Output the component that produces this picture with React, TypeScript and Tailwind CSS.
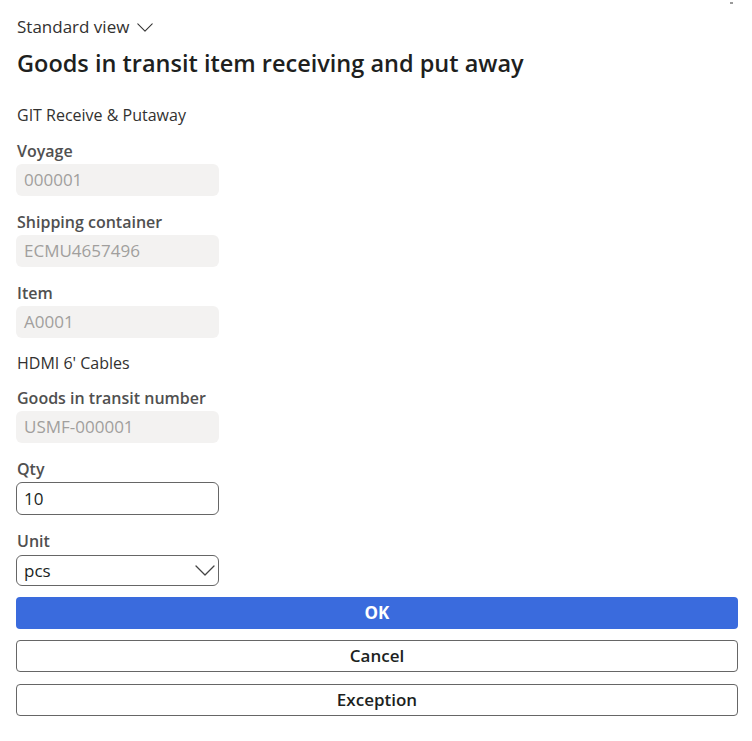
const FONT = "font-['Open_Sans','Noto_Sans',sans-serif]";

type Field = { label: string; value: string };

function Chevron({ className }: { className?: string }) {
  return (
    <svg viewBox="0 0 20 11" fill="none" stroke="currentColor" strokeWidth={1.3} className={className}>
      <polyline points="1,1 10,10 19,1" strokeLinecap="round" strokeLinejoin="round" />
    </svg>
  );
}

function Label({ children }: { children: React.ReactNode }) {
  return <label className="pl-[1px] text-[16px] leading-[20px] font-semibold text-[#505050]">{children}</label>;
}

function ReadOnlyField({ label, value }: Field) {
  return (
    <div className="flex flex-col">
      <Label>{label}</Label>
      <div className="mt-[3px] h-[32px] w-[203px] rounded-[6px] bg-[#f3f2f1] px-[8px] flex items-center text-[17px] text-[#a19f9d]">
        {value}
      </div>
    </div>
  );
}

export default function App() {
  return (
    <div className={`${FONT} relative min-h-screen bg-white px-[16px] pt-[15px] pb-[24px] text-[#323130]`}>
      <span className="absolute right-[19px] top-[2px] h-[2px] w-[3px] bg-[#9a9a9a]" />

      {/* Header */}
      <button className="flex items-center gap-[8px] pl-[1px] text-[17px] leading-[24px] text-[#323130]">
        Standard view
        <Chevron className="w-[16px] h-[9px] text-[#323130]" />
      </button>
      <h1 className="mt-[9px] pl-[1px] text-[23.5px] leading-[30px] font-semibold text-[#201f1e]">
        Goods in transit item receiving and put away
      </h1>

      <p className="mt-[27px] pl-[1px] text-[16px] leading-[20px]">GIT Receive &amp; Putaway</p>

      {/* Fields */}
      <div className="mt-[16px] flex flex-col gap-[16px]">
        <ReadOnlyField label="Voyage" value="000001" />
        <ReadOnlyField label="Shipping container" value="ECMU4657496" />
        <ReadOnlyField label="Item" value="A0001" />
      </div>

      <p className="mt-[15px] pl-[1px] text-[16px] leading-[20px]">HDMI 6' Cables</p>

      <div className="mt-[15px] flex flex-col gap-[16px]">
        <ReadOnlyField label="Goods in transit number" value="USMF-000001" />

        <div className="flex flex-col">
          <Label>Qty</Label>
          <input
            defaultValue="10"
            className="mt-[3px] h-[33px] w-[203px] rounded-[6px] border border-[#666] px-[7px] text-[17px] text-[#201f1e] outline-none"
          />
        </div>

        <div className="flex flex-col">
          <Label>Unit</Label>
          <div className="mt-[4px] h-[31px] w-[203px] rounded-[6px] border border-[#666] pl-[7px] pr-[3px] flex items-center justify-between text-[17px] text-[#201f1e]">
            <span>pcs</span>
            <Chevron className="w-[20px] h-[11px] text-[#444]" />
          </div>
        </div>
      </div>

      {/* Actions */}
      <div className="mt-[11px] flex flex-col w-[722px]">
        <button className="h-[32px] rounded-[4px] bg-[#3a6bdd] text-white text-[17px] font-bold">OK</button>
        <button className="mt-[11px] h-[32px] rounded-[4px] border border-[#666] bg-white text-[17px] font-semibold text-[#201f1e]">
          Cancel
        </button>
        <button className="mt-[12px] h-[32px] rounded-[4px] border border-[#666] bg-white text-[17px] font-semibold text-[#201f1e]">
          Exception
        </button>
      </div>
    </div>
  );
}
